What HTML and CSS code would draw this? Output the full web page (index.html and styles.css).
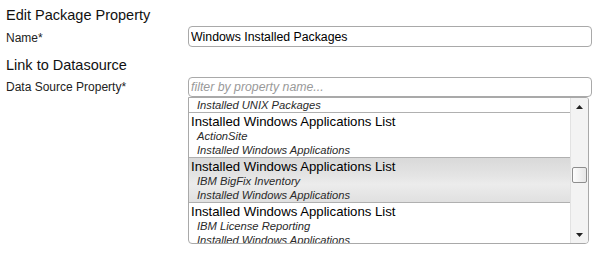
FILE: index.html
```html
<!DOCTYPE html>
<html lang="en">
<head>
  <meta charset="UTF-8" />
  <title>Edit Package Property</title>
  <link rel="stylesheet" href="styles.css">
</head>
<body>
  <div class="form">
    <h2 class="section-title">Edit Package Property</h2>
    <div class="field-row name-row">
      <label class="field-label" for="name">Name*</label>
      <input id="name" class="text-input" type="text" value="Windows Installed Packages">
    </div>

    <h2 class="section-title second">Link to Datasource</h2>
    <div class="field-row source-row">
      <label class="field-label" for="filter">Data Source Property*</label>
      <div class="picker">
        <input id="filter" class="text-input filter" type="text" placeholder="filter by property name...">
        <div class="listbox">
          <div class="list-viewport">
            <div class="item scrolled-off">
              <div class="item-title">Installed UNIX Packages List</div>
              <div class="item-sub">ActionSite</div>
              <div class="item-sub">Installed UNIX Packages</div>
            </div>
            <div class="item">
              <div class="item-title">Installed Windows Applications List</div>
              <div class="item-sub">ActionSite</div>
              <div class="item-sub">Installed Windows Applications</div>
            </div>
            <div class="item selected">
              <div class="item-title">Installed Windows Applications List</div>
              <div class="item-sub">IBM BigFix Inventory</div>
              <div class="item-sub">Installed Windows Applications</div>
            </div>
            <div class="item">
              <div class="item-title">Installed Windows Applications List</div>
              <div class="item-sub">IBM License Reporting</div>
              <div class="item-sub">Installed Windows Applications</div>
            </div>
          </div>
          <div class="scrollbar">
            <div class="scroll-btn">
              <svg width="7" height="4" viewBox="0 0 7 4"><path d="M0 4 L3.5 0 L7 4 Z" fill="#222"/></svg>
            </div>
            <div class="scroll-track">
              <div class="scroll-thumb"></div>
            </div>
            <div class="scroll-btn">
              <svg width="7" height="4" viewBox="0 0 7 4"><path d="M0 0 L7 0 L3.5 4 Z" fill="#222"/></svg>
            </div>
          </div>
        </div>
      </div>
    </div>
  </div>
</body>
</html>
```

FILE: styles.css
```css
body {
  margin: 0;
  padding: 6px 6px 0;
  font-family: "Liberation Sans", Arial, sans-serif;
  color: #111;
  background: #fff;
}

.section-title {
  margin: 0;
  font-size: 14.5px;
  font-weight: normal;
  line-height: 18px;
  color: #111;
}

.section-title.second {
  margin-top: 9px;
}

.field-row {
  display: grid;
  grid-template-columns: 182px 404px;
  align-items: start;
}

.name-row {
  margin-top: 2px;
}

.source-row {
  margin-top: 3px;
}

.field-label {
  font-size: 12px;
  line-height: 14px;
  color: #222;
}

.name-row .field-label {
  padding-top: 5px;
}

.source-row .field-label {
  padding-top: 3px;
}

.text-input {
  box-sizing: border-box;
  width: 404px;
  height: 21px;
  margin: 0;
  padding: 0 2px;
  border: 1px solid #a9a9a9;
  border-radius: 4px;
  font-family: "Liberation Sans", Arial, sans-serif;
  font-size: 12.3px;
  color: #000;
  background: #fff;
  outline: none;
}

.text-input.filter {
  display: block;
  height: 20px;
}

.text-input.filter::placeholder {
  color: #999;
  font-style: italic;
}

.listbox {
  box-sizing: border-box;
  width: 401px;
  height: 147px;
  display: flex;
  border: 1px solid #a9a9a9;
  border-radius: 0 3px 4px 4px;
  overflow: hidden;
}

.list-viewport {
  flex: 1;
  overflow: hidden;
}

.item {
  border-top: 1px solid #b0b0b0;
  padding: 1px 0 0 2px;
}

.item.scrolled-off {
  margin-top: -31px;
}

.item.selected {
  background: linear-gradient(#d9d9d9 0%, #e4e4e4 40%, #ececec 60%, #e0e0e0 100%);
}

.item-title {
  font-size: 13.2px;
  line-height: 15px;
  color: #000;
  white-space: nowrap;
}

.item-sub {
  padding-left: 6px;
  font-size: 11.2px;
  line-height: 14px;
  font-style: italic;
  color: #2a2a2a;
  white-space: nowrap;
}

.scrollbar {
  width: 17px;
  display: flex;
  flex-direction: column;
  background: #f3f3f3;
  border-left: 1px solid #e2e2e2;
}

.scroll-btn {
  height: 17px;
  display: flex;
  align-items: center;
  justify-content: center;
}

.scroll-track {
  flex: 1;
}

.scroll-thumb {
  box-sizing: border-box;
  height: 16px;
  margin: 52px 1px 0;
  border: 1px solid #8e8e8e;
  border-radius: 2px;
  background: linear-gradient(to right, #fdfdfd, #e6e6e6);
}
```
